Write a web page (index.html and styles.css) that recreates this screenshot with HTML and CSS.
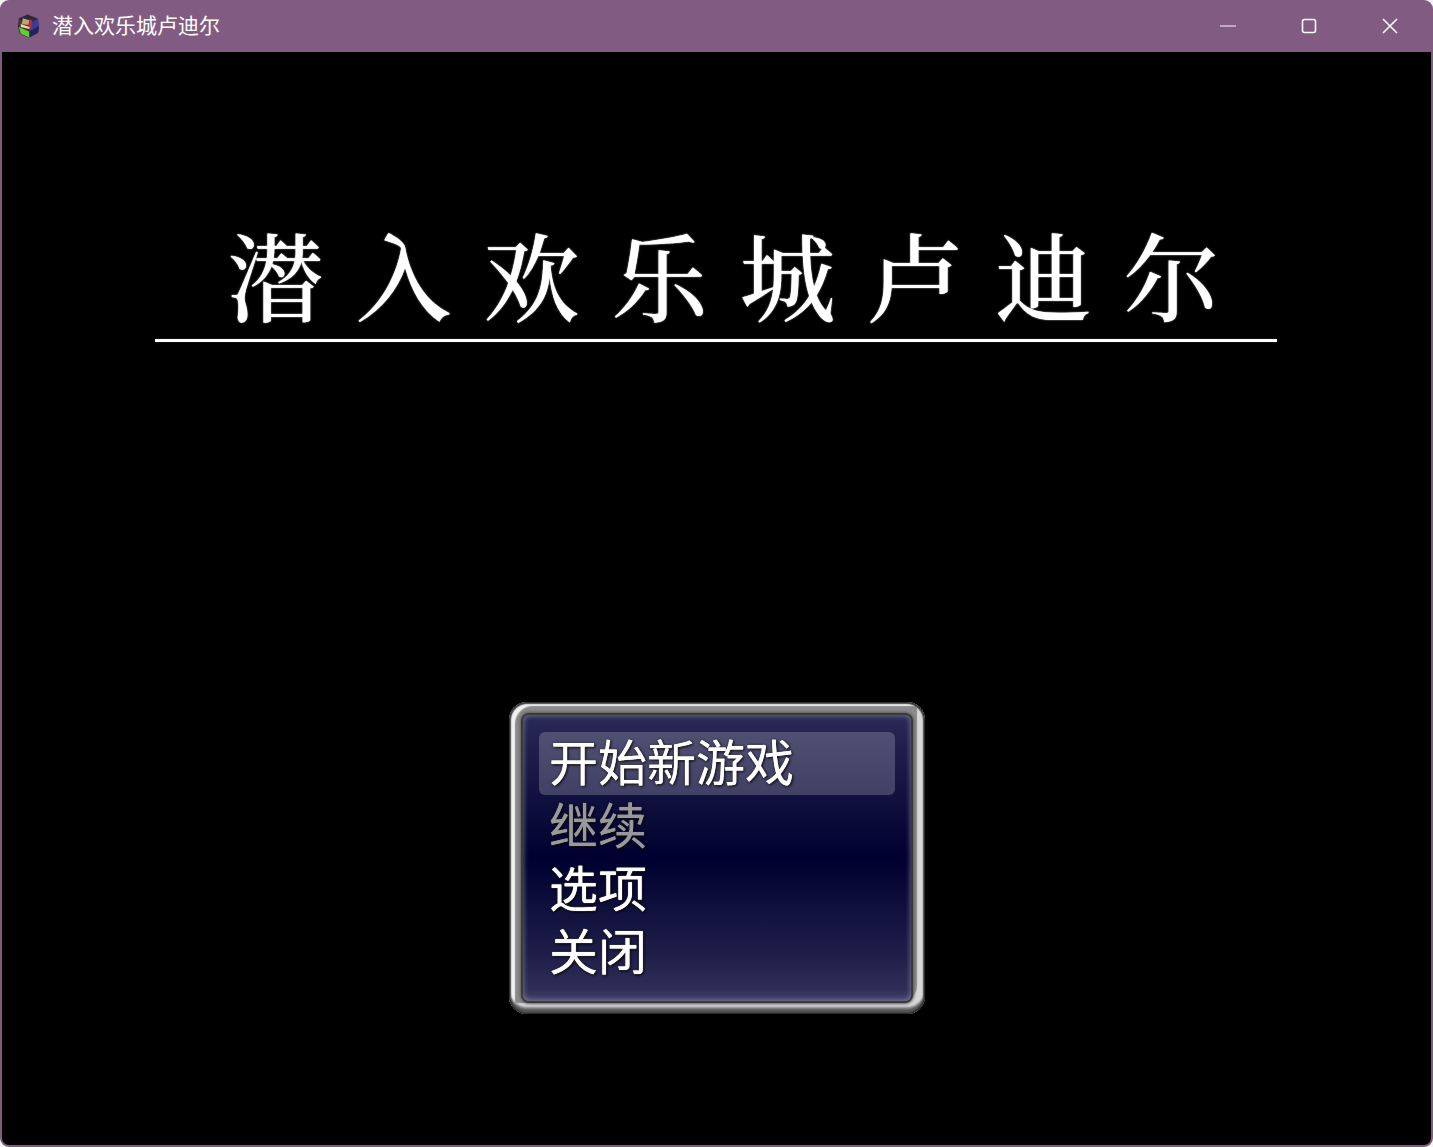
FILE: index.html
```html
<!DOCTYPE html>
<html lang="zh-CN">
<head>
<meta charset="utf-8">
<title>潜入欢乐城卢迪尔</title>
<link rel="stylesheet" href="styles.css">
</head>
<body>
<div class="window">
  <header class="titlebar">
    <svg class="app-icon" viewBox="0 0 24 26" aria-hidden="true">
      <path d="M11 1 21 5l2 8-1 7-10 5-9-4-2-8 1-8z" fill="#2b2a3a"/>
      <path d="M2 6l10 6v13l-9-4z" fill="#4b3a30"/>
      <path d="M2 14l11 5v6l-9-4z" fill="#5fd02e"/>
      <path d="M13 11l9-6 1 8-10 6z" fill="#3a3d98"/>
      <path d="M13 19l10-6-1 7-9 5z" fill="#23235a"/>
      <path d="M6 5l7 2-1 5-7-1z" fill="#c8a070"/>
      <path d="M13 6l3 1-1 9-3-1z" fill="#c02838"/>
      <path d="M4 11l9 3v2l-9-2z" fill="#e8d8b0"/>
    </svg>
    <span class="app-title">潜入欢乐城卢迪尔</span>
    <div class="controls">
      <svg class="control minimize" viewBox="0 0 16 16" aria-hidden="true"><path d="M0 8h16" /></svg>
      <svg class="control" viewBox="0 0 16 16" aria-hidden="true"><rect x="1.5" y="1.5" width="13" height="13" rx="2"/></svg>
      <svg class="control" viewBox="0 0 16 16" aria-hidden="true"><path d="M1 1l14 14M15 1 1 15"/></svg>
    </div>
  </header>
  <main class="stage">
    <div class="game-title">
      <h1 class="game-name"><span>潜</span><span>入</span><span>欢</span><span>乐</span><span>城</span><span>卢</span><span>迪</span><span>尔</span></h1>
      <div class="rule"></div>
    </div>
    <nav class="menu">
      <ul class="menu-list">
        <li class="menu-item selected">开始新游戏</li>
        <li class="menu-item disabled">继续</li>
        <li class="menu-item">选项</li>
        <li class="menu-item">关闭</li>
      </ul>
    </nav>
  </main>
</div>
</body>
</html>
```
FILE: styles.css
```css
* { box-sizing: border-box; }
html, body { margin: 0; height: 100%; background: #f4f2f4; }
body { overflow: hidden; }

.window {
  width: 1433px;
  height: 1147px;
  display: flex;
  flex-direction: column;
  background: #825b82;
  border-radius: 9px;
  overflow: hidden;
  padding: 0 2px 2px;
}

.titlebar {
  height: 52px;
  flex: none;
  display: flex;
  align-items: center;
  margin: 0 -2px;
  padding: 0 0 0 17px;
  color: #fff;
}
.app-icon { width: 23px; height: 26px; flex: none; margin-bottom: 1px; filter: blur(.5px); }
.app-title {
  margin: 0 0 3px 12px;
  font: 400 21px/1 "Noto Sans CJK SC", sans-serif;
}
.controls {
  margin-left: auto;
  display: flex;
  align-items: center;
  gap: 65px;
  padding-right: 35px;
}
.control { width: 16px; height: 16px; fill: none; stroke: #fff; stroke-width: 1.6; display: block; }
.minimize { stroke-width: 1; }

.stage {
  flex: 1;
  background: #000;
  display: flex;
  flex-direction: column;
  align-items: center;
  border-radius: 0 0 7px 7px;
  padding-top: 170px;
}

.game-title { width: 1122px; margin-right: 1px; }
.game-name {
  margin: 0;
  height: 117px;
  display: flex;
  justify-content: center;
  gap: 32px;
  padding-left: 15px;
  color: #fff;
  font: 500 96px/102px "Noto Serif CJK SC", "Source Han Serif SC", "AR PL UMing CN", serif;
  text-shadow: 0 0 1.5px #fff;
}
.rule { height: 3px; background: #fff; box-shadow: 0 0 1px #999; }

.menu {
  margin-top: 360px;
  width: 416px;
  height: 312px;
  margin-left: 1px;
  padding: 13px 14px;
  border-radius: 18px;
  background: #8b8b8b;
  box-shadow:
    inset 0 0 2px 1px #1c1c1c,
    inset 0 -5px 2px 0 #555,
    inset 0 -7px 2px 0 #8a8a8a,
    inset 0 0 1px 2px #666,
    inset 6px 4px 1px 0 #f0f0f0,
    inset -8px -11px 1px 0 #d8d8d8;
}
.menu-list {
  list-style: none;
  margin: 0;
  height: 100%;
  padding: 17px 16px 0;
  border-radius: 6px;
  background: linear-gradient(#2c2c58 0, #22224e 8%, #000030 50%, #20204a 85%, #2e2e58 96%, #44446a 100%);
  box-shadow:
    0 0 0 2px #3a3a3a,
    0 0 3px 3px #5a5a5a,
    inset 0 0 5px 1px rgba(170,170,190,.5);
}
.menu-item {
  height: 63px;
  padding-left: 10px;
  color: #fff;
  font: 400 49px/55px "Noto Sans CJK SC", sans-serif;
  text-shadow: 0 0 1px currentColor, 1px 1px 3px #000, 0 0 2px #000;
  white-space: nowrap;
}
.selected {
  border-radius: 6px;
  background: rgba(255,255,255,.2);
}
.disabled { color: #99999d; }
```
